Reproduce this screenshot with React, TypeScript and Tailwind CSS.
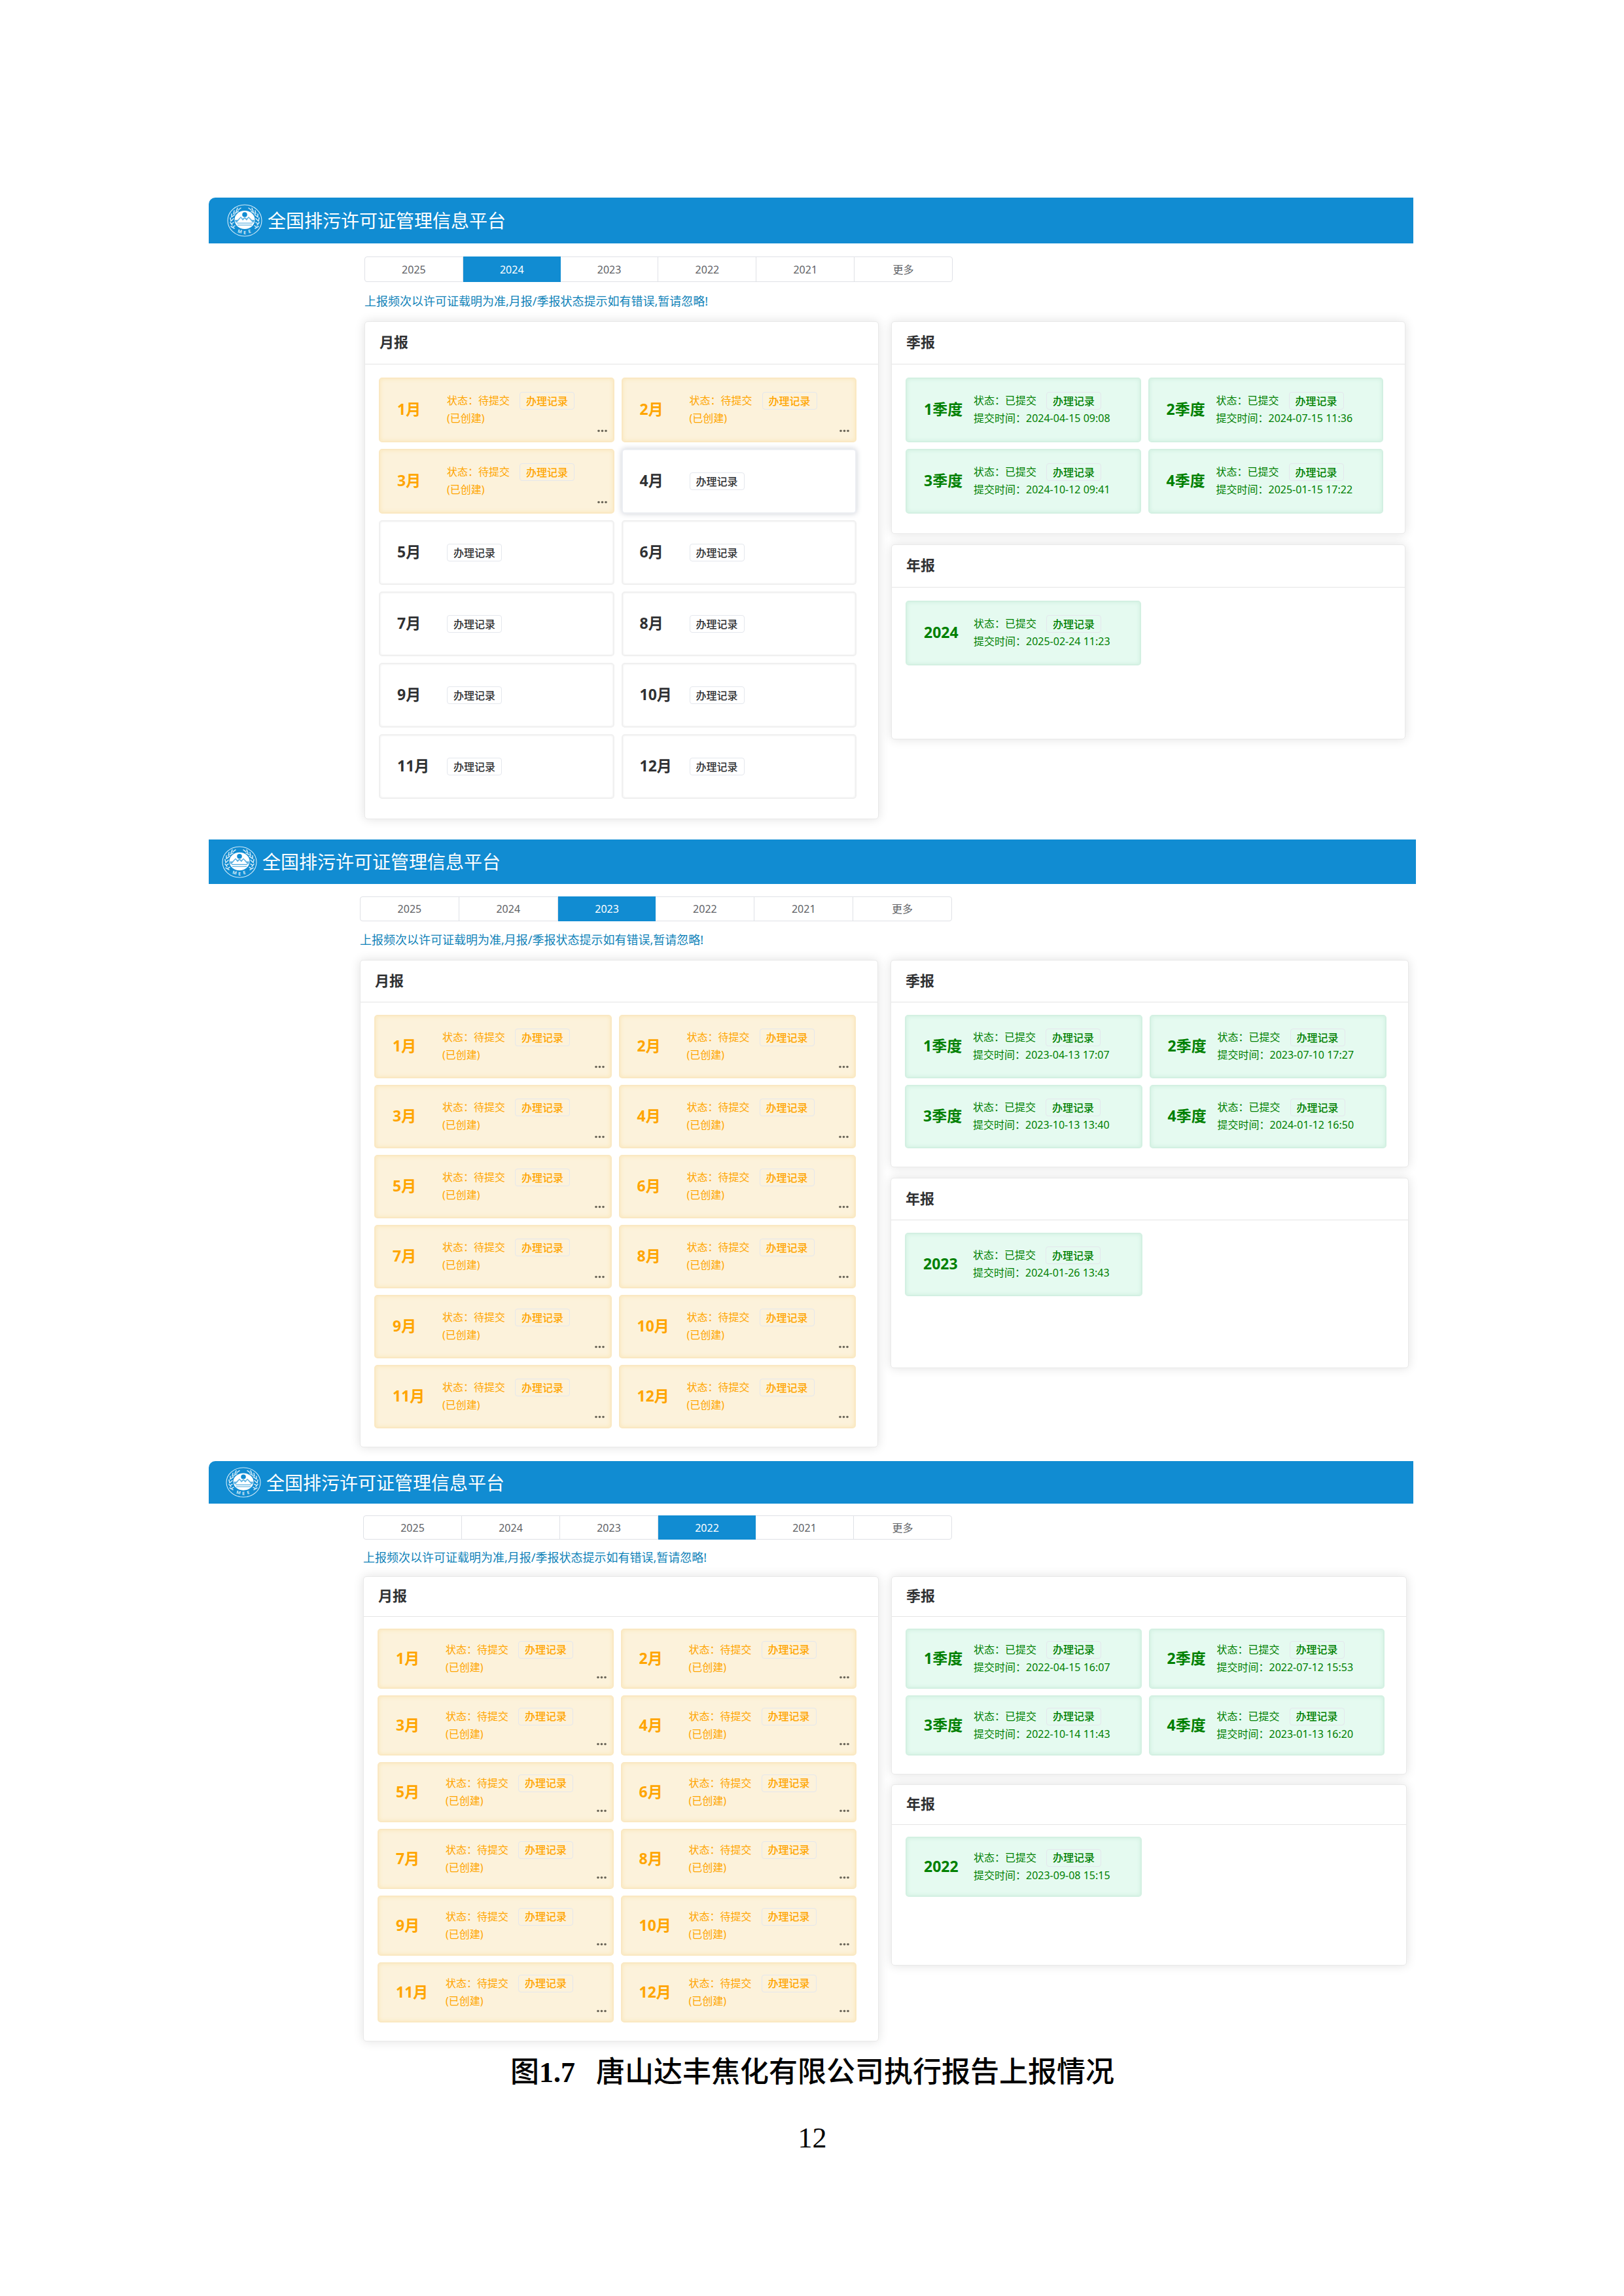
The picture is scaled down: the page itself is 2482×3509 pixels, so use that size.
import React from "react";

type Status = "pending" | "done" | "empty" | "hover";

interface Report {
    name: string;
    status: Status;
    time?: string;
}

interface Layout {
    banner: string;
    logo: string;
    content: string;
    tabs: string;
    notice: string;
    panelTitle: string;
    panelBody: string;
    card: string;
    gap: string;
    annual: string;
}

interface PlatformProps {
    year: string;
    months: Report[];
    quarters: Report[];
    annual: Report;
    layout: Layout;
}

const YEARS = ["2025", "2024", "2023", "2022", "2021", "更多"];

const cardStyles: Record<Status, string> = {
    pending: "bg-[#fcf2db] border-[#fae8c2] text-[#ffa500] shadow-[inset_0_0_6px_#fae6b8]",
    done: "bg-[#e5faf0] border-[#d3f0e2] text-[#008000] shadow-[inset_0_0_6px_#cdeede]",
    empty: "bg-white border-[#f0f0f0] text-[#303133] shadow-[inset_0_0_3px_#ececec]",
    hover: "bg-white border-[#eceef2] text-[#303133] shadow-[0_0_8px_#cccfd6]",
};

const makeMonths = (pending: number, hovered?: number): Report[] =>
    Array.from({ length: 12 }, (_, i) => ({
        name: `${i + 1}月`,
        status: i < pending ? "pending" : i + 1 === hovered ? "hover" : "empty",
    }));

const makeQuarters = (times: string[]): Report[] =>
    times.map((time, i) => ({ name: `${i + 1}季度`, status: "done", time }));

const Logo: React.FC<{ className: string }> = ({ className }) => (
    <svg className={`w-[54px] shrink-0 ${className}`} viewBox="0 0 54 50" preserveAspectRatio="none" fill="none" aria-hidden="true">
        <ellipse cx="27" cy="25" rx="26" ry="24" stroke="#d5ecf8" strokeWidth="1.1" />
        <ellipse cx="27" cy="24" rx="15.5" ry="14" fill="#fff" />
        <circle cx="27" cy="16" r="3.8" fill="#118cd2" />
        {/* Mountains */}
        <path d="M12 24 L16 24 L21 19 L24 22 L27 20 L30 22 L33 19 L38 24 L42 24 L41 28 L13 28 Z" fill="#5fb3e2" />
        <path d="M15 28 L21 21 L24 25 L27 22 L30 25 L33 21 L39 28 Z" fill="#fff" />
        <path d="M15 29 H39 M16 32 H38" stroke="#3ea2db" strokeWidth="1" />
        {/* Laurel branches */}
        <path
            d="M21 6 L17 9 M16 6 L14 11 M17 11 L12 14 M11 10 L10 15 M12 16 L8 19 M7 15 L7 20 M10 22 L7 25 M5 21 L6 26 M10 28 L7 30 M5 28 L8 32 M12 33 L9 35 M6 34 L11 37"
            stroke="#d5ecf8"
            strokeWidth="1.5"
            strokeLinecap="round"
        />
        <path
            d="M33 6 L37 9 M38 6 L40 11 M37 11 L42 14 M43 10 L44 15 M42 16 L46 19 M47 15 L47 20 M44 22 L47 25 M49 21 L48 26 M44 28 L47 30 M49 28 L46 32 M42 33 L45 35 M48 34 L43 37"
            stroke="#d5ecf8"
            strokeWidth="1.5"
            strokeLinecap="round"
        />
        <g fill="#d5ecf8" fontSize="7" fontWeight="700" fontFamily="Noto Sans, sans-serif" textAnchor="middle">
            <text transform="translate(19 44) rotate(14)">M</text>
            <text x="27" y="46">E</text>
            <text transform="translate(35 44) rotate(-14)">E</text>
        </g>
    </svg>
);

const RecordButton: React.FC = () => (
    <button type="button" className="h-[27px] rounded-sm border border-[#e4e7ed] px-[9px] font-medium leading-[24px]">
        办理记录
    </button>
);

const ReportCard: React.FC<{ report: Report; size: string }> = ({ report, size }) => {
    const { name, status, time } = report;
    const reported = status === "pending" || status === "done";

    return (
        <article className={`relative flex items-center rounded-[5px] border-2 pl-[26px] text-[16px] ${size} ${cardStyles[status]}`}>
            <h3 className="w-[76px] shrink-0 pb-[2px] text-[23px] font-bold">{name}</h3>
            {reported ? (
                <div className="pb-[1px] leading-[27px] whitespace-nowrap">
                    <div className="flex items-center">
                        <span className="w-[111px]">状态：{status === "done" ? "已提交" : "待提交"}</span>
                        <RecordButton />
                    </div>
                    <p>{time ? `提交时间：${time}` : "(已创建)"}</p>
                </div>
            ) : (
                <RecordButton />
            )}
            {status === "pending" && (
                <button type="button" aria-label={name} className="absolute right-[9px] bottom-[13px]">
                    <svg className="block h-[5px] w-[15px]" viewBox="0 0 15 5" fill="#6b6659">
                        <circle cx="2" cy="2.5" r="1.8" />
                        <circle cx="7.5" cy="2.5" r="1.8" />
                        <circle cx="13" cy="2.5" r="1.8" />
                    </svg>
                </button>
            )}
        </article>
    );
};

const Panel: React.FC<{ title: string; reports: Report[]; layout: Layout; className?: string }> = ({
    title,
    reports,
    layout,
    className = "",
}) => (
    <section className={`rounded-[5px] border border-[#e9e9e9] bg-white shadow-[0_0_16px_rgba(0,0,0,0.12)] ${className}`}>
        <h2 className={`flex items-center border-b border-[#e4e4e4] pb-[3px] pl-[22px] text-[22px] font-bold text-[#303133] ${layout.panelTitle}`}>
            {title}
        </h2>
        <div className={`grid grid-cols-2 gap-x-[11px] pl-[21px] pr-[33px] ${layout.panelBody}`}>
            {reports.map((report) => (
                <ReportCard key={report.name} report={report} size={layout.card} />
            ))}
        </div>
    </section>
);

const Platform: React.FC<PlatformProps> = ({ year, months, quarters, annual, layout }) => (
    <section>
        <header className={`flex items-center gap-[8px] bg-[#118cd2] text-white ${layout.banner}`}>
            <Logo className={layout.logo} />
            <h1 className="text-[28px]">全国排污许可证管理信息平台</h1>
        </header>
        <div className={layout.content}>
            {/* Year tabs */}
            <nav className={`flex rounded-[4px] border border-[#dfe1e6] text-[16px] ${layout.tabs}`}>
                {YEARS.map((item) => (
                    <button
                        key={item}
                        type="button"
                        className={
                            item === year
                                ? "-my-px flex-1 bg-[#118cd2] text-white"
                                : "flex-1 border-r border-[#dfe1e6] text-[#606266] last:border-r-0"
                        }
                    >
                        {item}
                    </button>
                ))}
            </nav>
            <p className={`flex items-center pb-[2px] text-[18px] text-[#0f82b8] ${layout.notice}`}>
                上报频次以许可证载明为准,月报/季报状态提示如有错误,暂请忽略!
            </p>
            <div className="grid grid-cols-2 items-start gap-x-[19px]">
                <Panel title="月报" reports={months} layout={layout} />
                <div className={`flex flex-col ${layout.gap}`}>
                    <Panel title="季报" reports={quarters} layout={layout} />
                    <Panel title="年报" reports={[annual]} layout={layout} className={layout.annual} />
                </div>
            </div>
        </div>
    </section>
);

const platforms: PlatformProps[] = [
    {
        year: "2024",
        months: makeMonths(3, 4),
        quarters: makeQuarters(["2024-04-15 09:08", "2024-07-15 11:36", "2024-10-12 09:41", "2025-01-15 17:22"]),
        annual: { name: "2024", status: "done", time: "2025-02-24 11:23" },
        layout: {
            banner: "h-[70px] mr-[4px] pl-[28px] rounded-tl-[10px]",
            logo: "h-[50px]",
            content: "pl-[238px] pr-[16px] pt-[20px] pb-[31px]",
            tabs: "h-[39px] w-[899px]",
            notice: "h-[60px]",
            panelTitle: "h-[65px]",
            panelBody: "gap-y-[10px] pt-[20px] pb-[30px]",
            card: "h-[99px]",
            gap: "gap-[16px]",
            annual: "min-h-[298px]",
        },
    },
    {
        year: "2023",
        months: makeMonths(12),
        quarters: makeQuarters(["2023-04-13 17:07", "2023-07-10 17:27", "2023-10-13 13:40", "2024-01-12 16:50"]),
        annual: { name: "2023", status: "done", time: "2024-01-26 13:43" },
        layout: {
            banner: "h-[68px] pl-[20px]",
            logo: "h-[49px]",
            content: "pl-[231px] pr-[11px] pt-[19px] pb-[21px]",
            tabs: "h-[38px] w-[905px]",
            notice: "h-[59px]",
            panelTitle: "h-[64px]",
            panelBody: "gap-y-[10px] pt-[19px] pb-[28px]",
            card: "h-[97px]",
            gap: "gap-[16px]",
            annual: "min-h-[291px]",
        },
    },
    {
        year: "2022",
        months: makeMonths(12),
        quarters: makeQuarters(["2022-04-15 16:07", "2022-07-12 15:53", "2022-10-14 11:43", "2023-01-13 16:20"]),
        annual: { name: "2022", status: "done", time: "2023-09-08 15:15" },
        layout: {
            banner: "h-[65px] mr-[4px] pl-[26px] rounded-tl-[10px]",
            logo: "h-[47px]",
            content: "pl-[236px] pr-[14px] pt-[18px]",
            tabs: "h-[37px] w-[900px]",
            notice: "h-[56px]",
            panelTitle: "h-[61px]",
            panelBody: "gap-y-[10px] pt-[18px] pb-[28px]",
            card: "h-[92px]",
            gap: "gap-[15px]",
            annual: "min-h-[277px]",
        },
    },
];

export default function App() {
    return (
        <main className="min-h-screen bg-white pt-[302px] pb-[200px] pl-[319px] pr-[318px] font-['Noto_Sans','Noto_Sans_CJK_SC',sans-serif]">
            {platforms.map((platform) => (
                <Platform key={platform.year} {...platform} />
            ))}
            <footer className="text-center font-['Liberation_Serif','Noto_Sans_CJK_SC',serif] text-[44px] text-black">
                <p className="mt-[16px] flex justify-center gap-[32px] leading-[64px] font-medium">
                    <span>
                        图<b>1.7</b>
                    </span>
                    <span>唐山达丰焦化有限公司执行报告上报情况</span>
                </p>
                <p className="mt-[36px] leading-[64px]">12</p>
            </footer>
        </main>
    );
}
